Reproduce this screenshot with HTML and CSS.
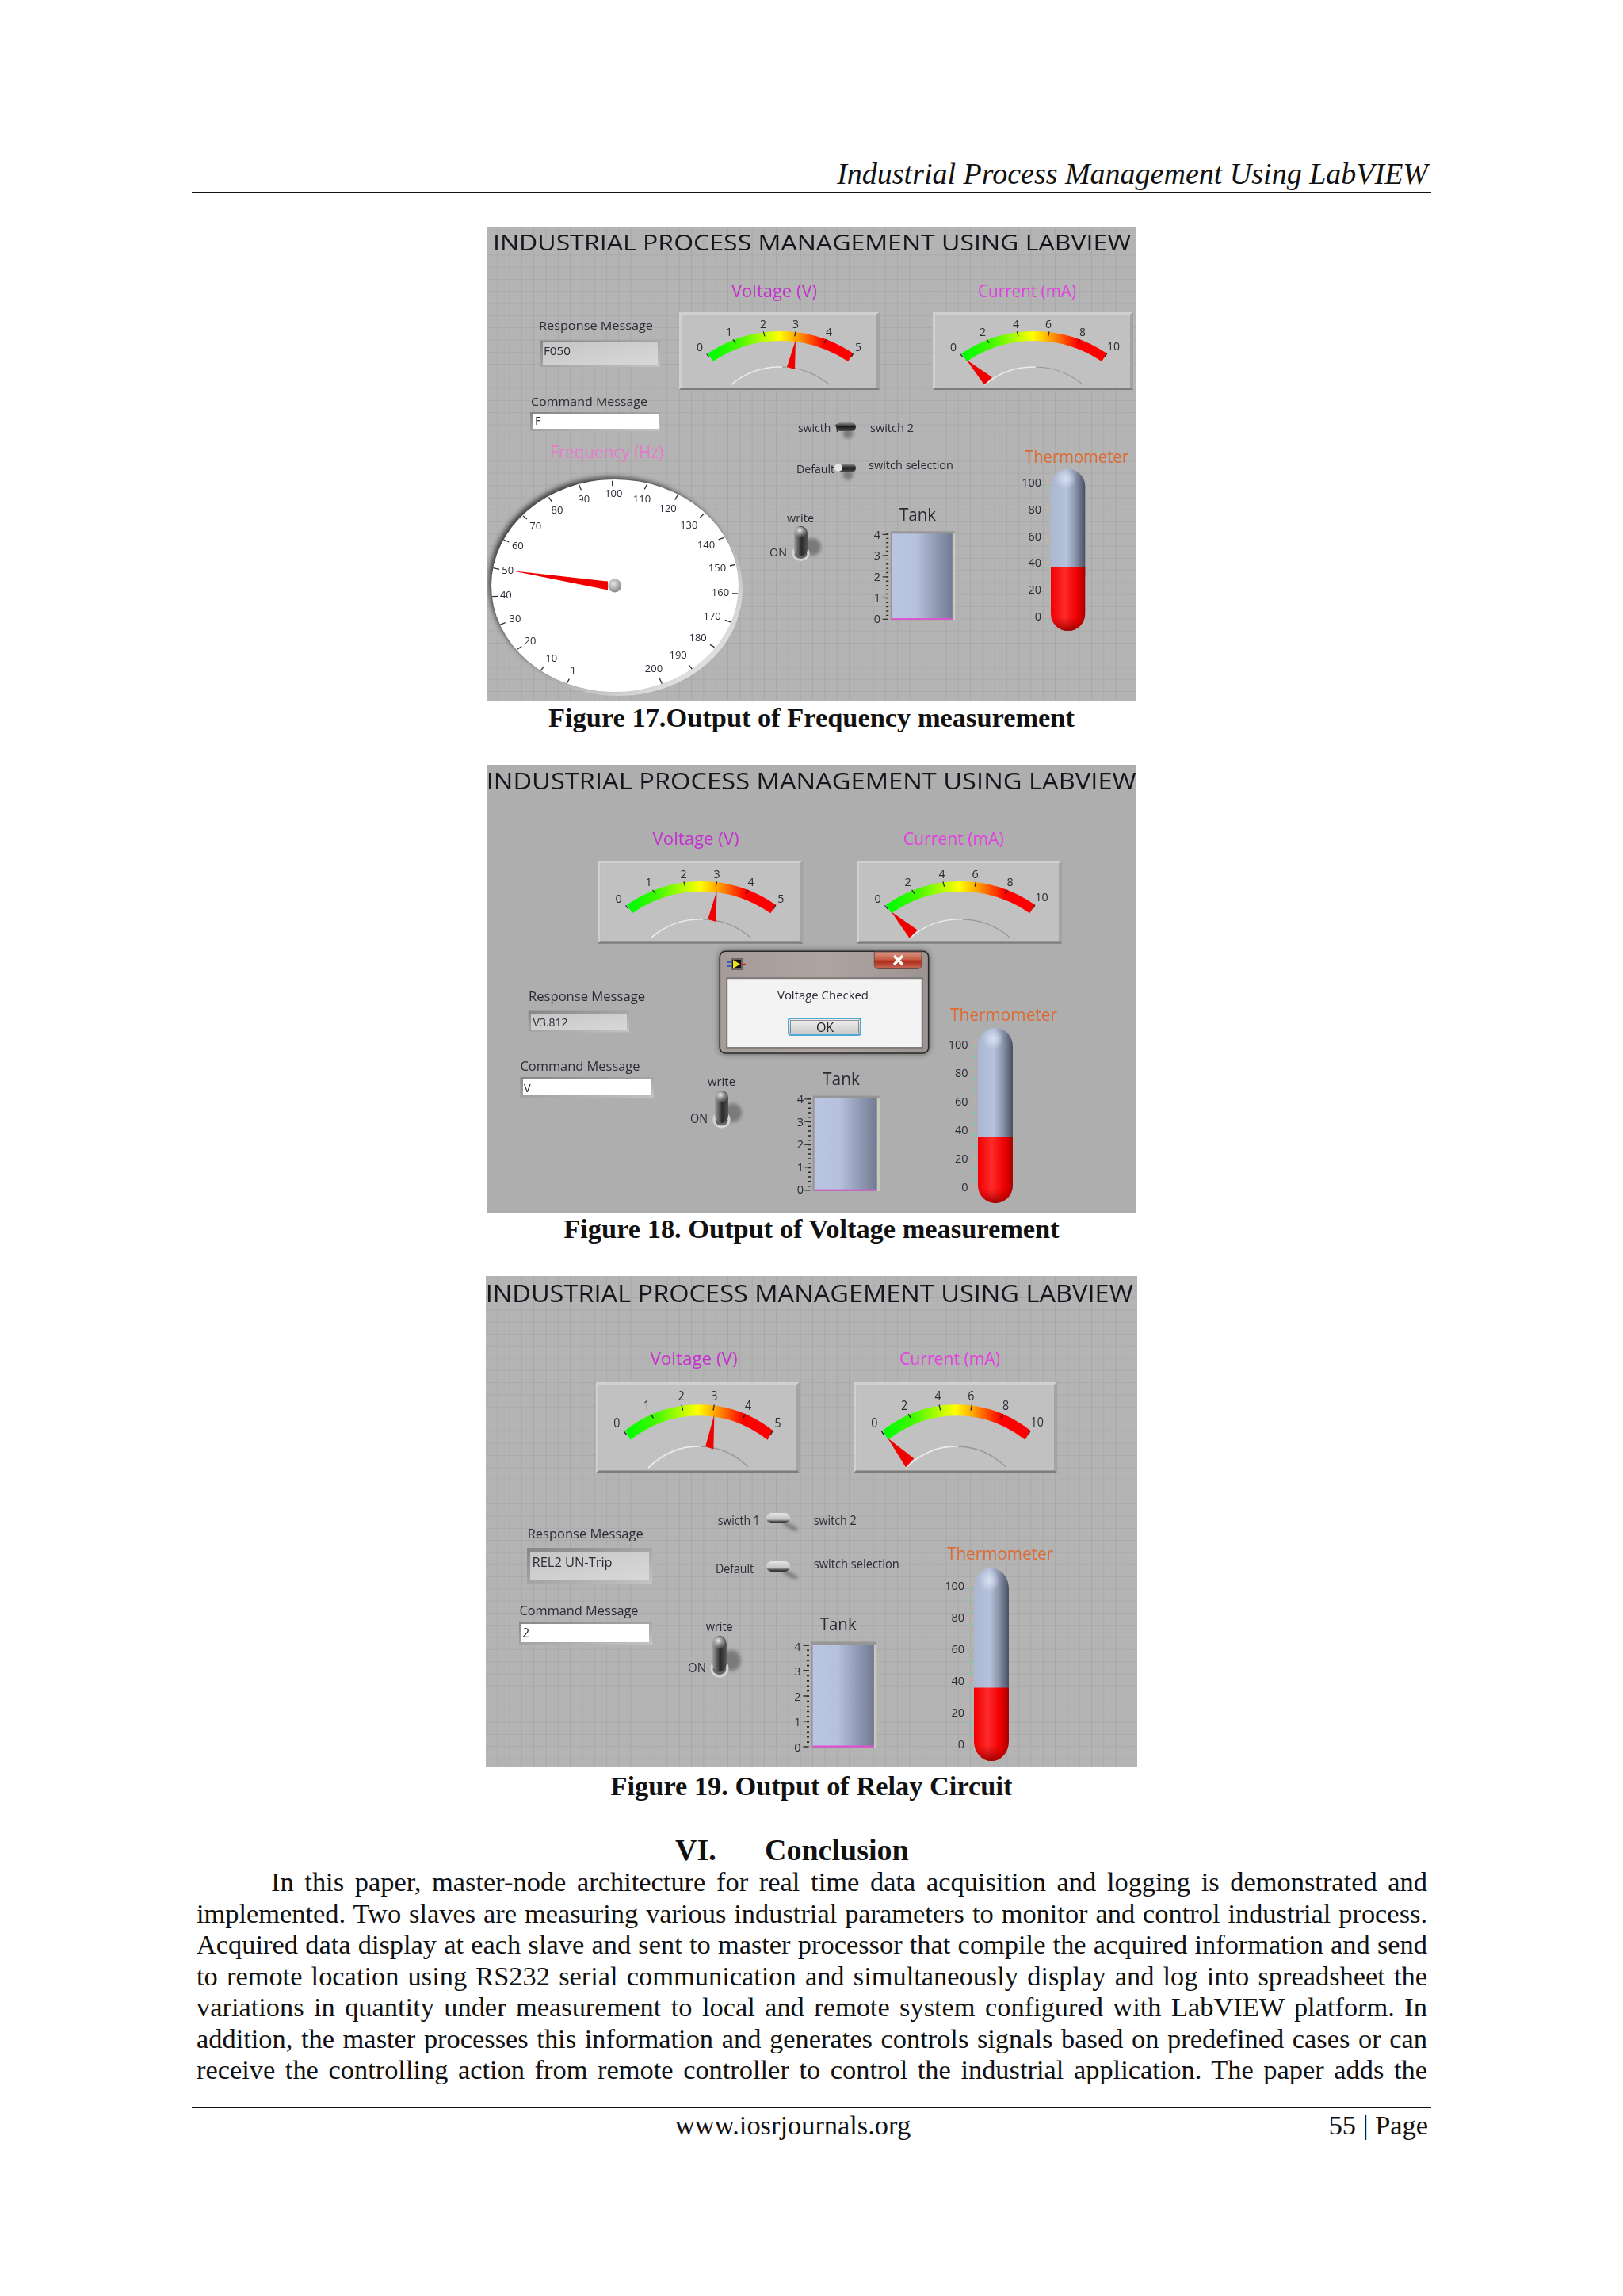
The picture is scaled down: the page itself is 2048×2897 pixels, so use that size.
FILE: index.html
```html
<!DOCTYPE html>
<html lang="en">
<head>
  <meta charset="UTF-8" />
  <meta name="viewport" content="width=device-width, initial-scale=1.0"/>
  <title>Industrial Process Management Using LabVIEW</title>
  <link rel="stylesheet" href="styles.css">
</head>
<body>
<div class="page">
  <header class="running-head">Industrial Process Management Using LabVIEW</header>

  <!-- shared widgets, page-coordinate panels below just place them -->
  <svg class="defs" width="0" height="0" aria-hidden="true">
    <defs>
      <pattern id="grid" width="15.3" height="15.3" patternUnits="userSpaceOnUse">
        <path d="M15.3 0H0V15.3" fill="none" stroke="#a0a0a0" stroke-width="1.1"/>
      </pattern>
      <linearGradient id="arcFill">
        <stop offset="0" stop-color="#00ff00"/>
        <stop offset=".2" stop-color="#44f800"/>
        <stop offset=".49" stop-color="#ffff00"/>
        <stop offset=".62" stop-color="#ffa000"/>
        <stop offset=".81" stop-color="#ff0000"/>
      </linearGradient>
      <linearGradient id="frame" x1="0" y1="0" x2="1" y2="1">
        <stop offset="0" stop-color="#858585"/>
        <stop offset="1" stop-color="#c4c4c4"/>
      </linearGradient>
      <linearGradient id="readout" x1="0" y1="0" x2="1" y2="1">
        <stop offset="0" stop-color="#c6c6c6"/>
        <stop offset="1" stop-color="#d8d8d8"/>
      </linearGradient>
      <linearGradient id="tankFill">
        <stop offset="0" stop-color="#b9c5e2"/>
        <stop offset=".4" stop-color="#b6c1dc"/>
        <stop offset="1" stop-color="#727a93"/>
      </linearGradient>
      <linearGradient id="thermoGlass">
        <stop offset="0" stop-color="#acb8d2"/>
        <stop offset=".45" stop-color="#b6c2dc"/>
        <stop offset=".7" stop-color="#8d97ae"/>
        <stop offset="1" stop-color="#4a5064"/>
      </linearGradient>
      <linearGradient id="thermoRed">
        <stop offset="0" stop-color="#f00000"/>
        <stop offset=".4" stop-color="#ff2a2a"/>
        <stop offset=".75" stop-color="#f00000"/>
        <stop offset="1" stop-color="#a80000"/>
      </linearGradient>
      <linearGradient id="redCap" x1="0" y1="0" x2="0" y2="1">
        <stop offset=".78" stop-color="#c00000" stop-opacity="0"/>
        <stop offset="1" stop-color="#900000" stop-opacity=".9"/>
      </linearGradient>
      <radialGradient id="glassTop" cx=".5" cy=".5" r=".5">
        <stop offset="0" stop-color="#d8e0f0"/>
        <stop offset="1" stop-color="#d8e0f0" stop-opacity="0"/>
      </radialGradient>
      <radialGradient id="hub" cx=".4" cy=".35" r=".7">
        <stop offset="0" stop-color="#e8e8e8"/>
        <stop offset="1" stop-color="#808080"/>
      </radialGradient>
      <linearGradient id="dialRim" x1="0" y1="0" x2="1" y2="1">
        <stop offset=".55" stop-color="#b0b0b0"/>
        <stop offset=".85" stop-color="#e0e0e0"/>
        <stop offset="1" stop-color="#bcbcbc"/>
      </linearGradient>
      <linearGradient id="leverDark" x1="0" y1="0" x2="0" y2="1">
        <stop offset="0" stop-color="#9a9a9a"/>
        <stop offset=".5" stop-color="#1c1c1c"/>
        <stop offset="1" stop-color="#555"/>
      </linearGradient>
      <linearGradient id="leverLight" x1="0" y1="0" x2="0" y2="1">
        <stop offset="0" stop-color="#e4e4e4"/>
        <stop offset=".6" stop-color="#c4c4c4"/>
        <stop offset=".85" stop-color="#444"/>
        <stop offset="1" stop-color="#333"/>
      </linearGradient>
      <linearGradient id="leverTall">
        <stop offset="0" stop-color="#a0a0a0"/>
        <stop offset=".55" stop-color="#2a2a2a"/>
        <stop offset="1" stop-color="#555"/>
      </linearGradient>
      <radialGradient id="knob" cx=".45" cy=".35" r=".6">
        <stop offset="0" stop-color="#f0f0f0"/>
        <stop offset="1" stop-color="#8c8c8c" stop-opacity=".4"/>
      </radialGradient>
      <linearGradient id="closeRed" x1="0" y1="0" x2="0" y2="1">
        <stop offset="0" stop-color="#d89a88"/>
        <stop offset=".45" stop-color="#c45a42"/>
        <stop offset=".55" stop-color="#b02a18"/>
        <stop offset="1" stop-color="#c8705c"/>
      </linearGradient>
      <linearGradient id="dlgTitle">
        <stop offset="0" stop-color="#a59b98"/>
        <stop offset=".5" stop-color="#b0a4a0"/>
        <stop offset="1" stop-color="#9c9492"/>
      </linearGradient>
      <linearGradient id="okFace" x1="0" y1="0" x2="0" y2="1">
        <stop offset="0" stop-color="#f2f2f2"/>
        <stop offset=".5" stop-color="#dcdcdc"/>
        <stop offset="1" stop-color="#c8c8c8"/>
      </linearGradient>
      <filter id="soft2" x="-20%" y="-20%" width="140%" height="140%"><feGaussianBlur stdDeviation="2"/></filter>
      <filter id="soft3" x="-20%" y="-20%" width="140%" height="140%"><feGaussianBlur stdDeviation="3"/></filter>
      <filter id="soft4" x="-20%" y="-20%" width="140%" height="140%"><feGaussianBlur stdDeviation="4"/></filter>

      <g id="meter">
        <rect width="253" height="98" fill="#8a8a8a"/>
        <polygon points="0,0 253,0 249,3 3,3 3,95 0,98" fill="#d0d0d0"/>
        <polygon points="253,0 253,98 249,95 249,3" fill="#a4a4a4"/>
        <polygon points="0,98 253,98 250,95 3,95" fill="#7c7c7c"/>
        <rect x="3" y="3" width="246" height="92" fill="#c1c1c1"/>
        <path d="M39.5 57A158.5 158.5 0 0 1 216.5 57" fill="none" stroke="url(#arcFill)" stroke-width="12"/>
        <path d="M34.7 52.7L38 56.7M68 34.3L71.3 38.7M106.3 24.3L108 30.3M147 24.3L145.7 30.3M185.7 34.3L183 38.7M219.7 52L217 56.7" stroke="#222" stroke-width="1.2" fill="none"/>
        <path d="M65 92A95 95 0 0 1 130 69" fill="none" stroke="#ececec" stroke-width="1.6"/>
        <path d="M130 69A95 95 0 0 1 189 91" fill="none" stroke="#969696" stroke-width="1.2"/>
      </g>

      <g id="tank">
        <rect x="-2" y="-3" width="81" height="112" fill="#8d8d8d" opacity=".75"/>
        <rect x="76" y="0" width="3.5" height="109" fill="#c6cabb"/>
        <rect width="76" height="108" fill="url(#tankFill)"/>
        <rect y="106.8" width="76" height="1.8" fill="#e050d0"/>
        <path d="M-6 0V108" stroke="#222" stroke-width="3" stroke-dasharray="1.4 3.99" fill="none"/>
        <path d="M-12 1H-5M-12 27.5H-5M-12 54.5H-5M-12 81H-5M-12 108H-5" stroke="#333" stroke-width="1.2" fill="none"/>
      </g>

      <g id="thermoGlassPart">
        <path d="M0 21.6A21.65 21.65 0 0 1 43.3 21.6V135H0Z" fill="url(#thermoGlass)"/>
        <ellipse cx="19" cy="13" rx="13" ry="12" fill="url(#glassTop)"/>
        <path d="M-4 20V188" stroke="#6ad8a4" stroke-width="2" stroke-dasharray="2 11" fill="none"/>
        <path d="M-6 17.4H-2M-6 51H-2M-6 85H-2M-6 118.4H-2M-6 152H-2M-6 186H-2" stroke="#dba98c" stroke-width="1.4" fill="none"/>
      </g>
      <g id="thermoRedPart">
        <path d="M0 0H43.3V59.4A21.65 21.65 0 0 1 0 59.4Z" fill="url(#thermoRed)"/>
        <path d="M0 0H43.3V59.4A21.65 21.65 0 0 1 0 59.4Z" fill="url(#redCap)"/>
      </g>

      <g id="bigToggle">
        <ellipse cx="23" cy="26" rx="11" ry="11" fill="#7a7a7a" filter="url(#soft2)"/>
        <ellipse cx="8.5" cy="34" rx="11" ry="10" fill="#d4d4d4"/>
        <ellipse cx="8.5" cy="35" rx="8" ry="6" fill="#666"/>
        <rect width="17" height="38" rx="8.5" fill="url(#leverTall)"/>
        <ellipse cx="8" cy="7" rx="7.5" ry="6.5" fill="url(#knob)"/>
      </g>
      <g id="leverDarkPart">
        <circle cx="15" cy="14" r="6.5" fill="#7c7c7c" filter="url(#soft2)"/>
        <rect width="25" height="11" rx="5.5" fill="url(#leverDark)"/>
      </g>
      <g id="leverLightPart">
        <path d="M24 11L38 18L40 23L32 21L20 14Z" fill="#777" filter="url(#soft2)"/>
        <rect width="30" height="13" rx="6.5" fill="url(#leverLight)"/>
      </g>
    </defs>
  </svg>

  <figure class="figure fig-17">
    <svg class="panel" width="818" height="599" viewBox="615 286 818 599">
      <rect x="615" y="286" width="818" height="599" class="panel-bg"/>
      <rect x="615" y="286" width="818" height="599" fill="url(#grid)"/>
      <text class="t-title" x="622" y="316" textLength="805" lengthAdjust="spacingAndGlyphs">INDUSTRIAL PROCESS MANAGEMENT USING LABVIEW</text>

      <text class="t-head t-voltage" x="923" y="375" textLength="108" lengthAdjust="spacingAndGlyphs">Voltage (V)</text>
      <text class="t-head t-current" x="1234" y="375" textLength="124" lengthAdjust="spacingAndGlyphs">Current (mA)</text>

      <g transform="translate(857 394)">
        <use href="#meter"/>
        <polygon points="147,35 136,69 146,72" fill="#f00000"/>
        <text class="t-scale" x="26" y="49">0</text><text class="t-scale" x="63" y="30">1</text><text class="t-scale" x="106" y="20">2</text><text class="t-scale" x="147" y="20">3</text><text class="t-scale" x="189" y="30">4</text><text class="t-scale" x="226" y="49">5</text>
      </g>
      <g transform="translate(1177 394)">
        <use href="#meter"/>
        <polygon points="42.5,60 65,91.6 75,82" fill="#f00000"/>
        <text class="t-scale" x="26" y="49">0</text><text class="t-scale" x="63" y="30">2</text><text class="t-scale" x="105" y="20">4</text><text class="t-scale" x="146" y="20">6</text><text class="t-scale" x="189" y="30">8</text><text class="t-scale" x="228" y="48">10</text>
      </g>

      <text class="t-label" x="680" y="416" textLength="144" lengthAdjust="spacingAndGlyphs">Response Message</text>
      <rect x="681" y="429.5" width="152" height="33.5" fill="url(#frame)"/>
      <rect x="685" y="432" width="145" height="28" fill="url(#readout)"/>
      <text class="t-label" x="686" y="448" textLength="34" lengthAdjust="spacingAndGlyphs">F050</text>
      <text class="t-label" x="670" y="512" textLength="147" lengthAdjust="spacingAndGlyphs">Command Message</text>
      <rect x="669" y="520" width="164" height="24" fill="url(#frame)"/>
      <rect x="672" y="522" width="160" height="19" fill="#fff"/>
      <text class="t-label" x="675" y="536">F</text>

      <text class="t-head t-freq" x="694" y="578" textLength="143" lengthAdjust="spacingAndGlyphs">Frequency (Hz)</text>

      <text class="t-label" x="1007" y="545" textLength="53" lengthAdjust="spacingAndGlyphs">swicth 1</text>
      <use href="#leverDarkPart" transform="translate(1055 533)"/>
      <text class="t-label" x="1098" y="545" textLength="55" lengthAdjust="spacingAndGlyphs">switch 2</text>
      <text class="t-label" x="1005" y="597" textLength="48" lengthAdjust="spacingAndGlyphs">Default</text>
      <use href="#leverDarkPart" transform="translate(1055 585)"/>
      <circle cx="1058" cy="590" r="5" fill="#e4e4e4"/>
      <text class="t-label" x="1096" y="592" textLength="107" lengthAdjust="spacingAndGlyphs">switch selection</text>

      <text class="t-label" x="993" y="659" textLength="34" lengthAdjust="spacingAndGlyphs">write</text>
      <text class="t-label" x="971" y="702" textLength="22" lengthAdjust="spacingAndGlyphs">ON</text>
      <use href="#bigToggle" transform="translate(1002 664)"/>

      <!-- dial -->
      <ellipse cx="780" cy="743" rx="157" ry="135" fill="url(#dialRim)"/>
      <ellipse cx="772" cy="735" rx="155" ry="133" fill="#3c3c3c" filter="url(#soft3)"/>
      <ellipse cx="776" cy="739" rx="156" ry="134" fill="#fff"/>
      <g transform="translate(610 590) scale(.3333)">
        <path class="dial-ticks" d="M488 50V70M362 65L370 85M248 112L258 128M150 183L165 195M77 273L97 282M37 380L60 385M33 488L55 487M62 595L83 587M128 688L145 677M217 768L230 752M315 818L325 800M620 63L610 82M735 105L725 122M835 175L820 190M910 265L890 273M953 367L933 372M963 477H942M936 585L915 577M875 680L858 670M790 762L778 748M676 818L667 798"/>
        <text class="t-dial" x="493" y="110">100</text><text class="t-dial" x="380" y="131">90</text><text class="t-dial" x="279" y="173">80</text><text class="t-dial" x="197" y="235">70</text><text class="t-dial" x="130" y="309">60</text><text class="t-dial" x="92" y="401">50</text><text class="t-dial" x="85" y="496">40</text><text class="t-dial" x="120" y="586">30</text><text class="t-dial" x="177" y="668">20</text><text class="t-dial" x="257" y="735">10</text><text class="t-dial" x="340" y="781">1</text><text class="t-dial" x="600" y="131">110</text><text class="t-dial" x="698" y="168">120</text><text class="t-dial" x="778" y="230">130</text><text class="t-dial" x="843" y="306">140</text><text class="t-dial" x="885" y="393">150</text><text class="t-dial" x="897" y="486">160</text><text class="t-dial" x="866" y="576">170</text><text class="t-dial" x="812" y="658">180</text><text class="t-dial" x="737" y="723">190</text><text class="t-dial" x="645" y="775">200</text>
      </g>
      <polygon points="645,720 767,733.5 767,744.5" fill="#f00000"/>
      <circle cx="775.7" cy="739" r="8.5" fill="url(#hub)"/>

      <text class="t-big" x="1135" y="657" textLength="46" lengthAdjust="spacingAndGlyphs">Tank</text>
      <use href="#tank" transform="translate(1125.7 673.3)"/>
      <text class="t-num" x="1107" y="680">4</text><text class="t-num" x="1107" y="706">3</text><text class="t-num" x="1107" y="733">2</text><text class="t-num" x="1107" y="759">1</text><text class="t-num" x="1107" y="786">0</text>

      <text class="t-head t-thermo" x="1293" y="584" textLength="131" lengthAdjust="spacingAndGlyphs">Thermometer</text>
      <use href="#thermoGlassPart" transform="translate(1326 591.6)"/>
      <use href="#thermoRedPart" transform="translate(1326 715)"/>
      <text class="t-num t-end" x="1314" y="614">100</text><text class="t-num t-end" x="1314" y="648">80</text><text class="t-num t-end" x="1314" y="682">60</text><text class="t-num t-end" x="1314" y="715">40</text><text class="t-num t-end" x="1314" y="749">20</text><text class="t-num t-end" x="1314" y="783">0</text>
    </svg>
    <figcaption class="caption">Figure 17.Output of Frequency measurement</figcaption>
  </figure>

  <figure class="figure fig-18">
    <svg class="panel" width="819" height="565" viewBox="614 964 819 565">
      <rect x="614" y="964" width="819" height="565" class="panel-bg panel-bg-plain"/>
      <text class="t-title t-title-2" x="612.7" y="994.5" textLength="820" lengthAdjust="spacingAndGlyphs">INDUSTRIAL PROCESS MANAGEMENT USING LABVIEW</text>

      <text class="t-head t-voltage" x="822.6" y="1065" textLength="109" lengthAdjust="spacingAndGlyphs">Voltage (V)</text>
      <text class="t-head t-current" x="1138.7" y="1065" textLength="127" lengthAdjust="spacingAndGlyphs">Current (mA)</text>

      <g transform="translate(753 1085.5) scale(1.024 1.062)">
        <use href="#meter"/>
        <polygon points="147,35 136,69 146,72" fill="#f00000"/>
        <text class="t-scale" x="26" y="49">0</text><text class="t-scale" x="63" y="30">1</text><text class="t-scale" x="106" y="20">2</text><text class="t-scale" x="147" y="20">3</text><text class="t-scale" x="189" y="30">4</text><text class="t-scale" x="226" y="49">5</text>
      </g>
      <g transform="translate(1080 1085.5) scale(1.024 1.062)">
        <use href="#meter"/>
        <polygon points="42.5,60 65,91.6 75,82" fill="#f00000"/>
        <text class="t-scale" x="26" y="49">0</text><text class="t-scale" x="63" y="30">2</text><text class="t-scale" x="105" y="20">4</text><text class="t-scale" x="146" y="20">6</text><text class="t-scale" x="189" y="30">8</text><text class="t-scale" x="228" y="48">10</text>
      </g>

      <text class="t-label t-label-lg" x="666" y="1262" textLength="147" lengthAdjust="spacingAndGlyphs">Response Message</text>
      <rect x="665.7" y="1274.6" width="127.3" height="26.8" fill="url(#frame)"/>
      <rect x="669" y="1278" width="121" height="20" fill="url(#readout)"/>
      <text class="t-label" x="671.6" y="1294" textLength="44" lengthAdjust="spacingAndGlyphs">V3.812</text>
      <text class="t-label t-label-lg" x="655.5" y="1350" textLength="151" lengthAdjust="spacingAndGlyphs">Command Message</text>
      <rect x="655.5" y="1358" width="168.5" height="27" fill="url(#frame)"/>
      <rect x="659" y="1361" width="161.5" height="20" fill="#fff"/>
      <text class="t-label" x="660" y="1377">V</text>

      <text class="t-label" x="892" y="1369" textLength="35" lengthAdjust="spacingAndGlyphs">write</text>
      <text class="t-label t-label-lg" x="870" y="1416" textLength="22" lengthAdjust="spacingAndGlyphs">ON</text>
      <use href="#bigToggle" transform="translate(901 1375) scale(1 1.08)"/>

      <text class="t-big" x="1037" y="1367.5" textLength="47" lengthAdjust="spacingAndGlyphs">Tank</text>
      <use href="#tank" transform="translate(1026.7 1384.8) scale(1.037 1.075)"/>
      <text class="t-num" x="1009" y="1391">4</text><text class="t-num" x="1009" y="1420">3</text><text class="t-num" x="1009" y="1448">2</text><text class="t-num" x="1009" y="1477">1</text><text class="t-num" x="1009" y="1505">0</text>

      <text class="t-head t-thermo" x="1198" y="1287" textLength="135" lengthAdjust="spacingAndGlyphs">Thermometer</text>
      <use href="#thermoGlassPart" transform="translate(1233 1296) scale(1.016 1.081)"/>
      <use href="#thermoRedPart" transform="translate(1233 1433.4) scale(1.016 1.032)"/>
      <text class="t-num t-end" x="1220.6" y="1322">100</text><text class="t-num t-end" x="1220.6" y="1358">80</text><text class="t-num t-end" x="1220.6" y="1394">60</text><text class="t-num t-end" x="1220.6" y="1430">40</text><text class="t-num t-end" x="1220.6" y="1466">20</text><text class="t-num t-end" x="1220.6" y="1502">0</text>

      <!-- message box sits over the panel -->
      <rect x="907.3" y="1199.3" width="263.4" height="128.7" rx="7" fill="#000" opacity=".55" filter="url(#soft4)"/>
      <rect x="907.3" y="1199.3" width="263.4" height="128.7" rx="7" fill="url(#dlgTitle)" stroke="#2a2a2a" stroke-width="1.6"/>
      <path d="M1102.3 1200V1216a5 5 0 0 0 5 5.5H1157a5 5 0 0 0 5-5.5V1200Z" fill="url(#closeRed)" stroke="#6e4a44"/>
      <path d="M1127 1205L1138 1216M1138 1205L1127 1216" stroke="#fff" stroke-width="3.4"/>
      <rect x="921" y="1208" width="15" height="15" fill="#666"/>
      <rect x="923" y="1210" width="11" height="11" fill="#111"/>
      <polygon points="924,1210 933,1215.5 924,1221" fill="#f2e020"/>
      <path d="M917 1213H922M917 1218H922" stroke="#2040d0" stroke-width="1.4"/>
      <path d="M935 1215.5H940" stroke="#d02020" stroke-width="1.4"/>
      <rect x="916" y="1233" width="247" height="88" fill="none" stroke="#777" stroke-width="1.6"/>
      <rect x="917.3" y="1234.3" width="244.4" height="85.7" fill="#f3f3f3"/>
      <text class="t-label" x="980" y="1259.5" textLength="115" lengthAdjust="spacingAndGlyphs">Voltage Checked</text>
      <rect x="994" y="1284" width="91" height="21" rx="3" fill="url(#okFace)" stroke="#4ea6d4" stroke-width="2"/>
      <rect x="996.5" y="1286.5" width="86" height="16" fill="none" stroke="#333" stroke-width="1" stroke-dasharray="1 1"/>
      <text class="t-ok" x="1040" y="1300.5">OK</text>
    </svg>
    <figcaption class="caption">Figure 18. Output of Voltage measurement</figcaption>
  </figure>

  <figure class="figure fig-19">
    <svg class="panel" width="822" height="619" viewBox="613 1610 822 619">
      <rect x="613" y="1610" width="822" height="619" class="panel-bg"/>
      <rect x="613" y="1610" width="822" height="619" fill="url(#grid)"/>
      <text class="t-title t-title-3" x="612.7" y="1643" textLength="817" lengthAdjust="spacingAndGlyphs">INDUSTRIAL PROCESS MANAGEMENT USING LABVIEW</text>

      <text class="t-head t-head-lg t-voltage" x="820.5" y="1722" textLength="110" lengthAdjust="spacingAndGlyphs">Voltage (V)</text>
      <text class="t-head t-head-lg t-current" x="1135" y="1722" textLength="127" lengthAdjust="spacingAndGlyphs">Current (mA)</text>

      <g transform="translate(752 1744) scale(1.016 1.173)">
        <use href="#meter"/>
        <polygon points="147,35 136,69 146,72" fill="#f00000"/>
        <text class="t-scale" x="26" y="49">0</text><text class="t-scale" x="63" y="30">1</text><text class="t-scale" x="106" y="20">2</text><text class="t-scale" x="147" y="20">3</text><text class="t-scale" x="189" y="30">4</text><text class="t-scale" x="226" y="49">5</text>
      </g>
      <g transform="translate(1077 1744) scale(1.016 1.173)">
        <use href="#meter"/>
        <polygon points="42.5,60 65,91.6 75,82" fill="#f00000"/>
        <text class="t-scale" x="26" y="49">0</text><text class="t-scale" x="63" y="30">2</text><text class="t-scale" x="105" y="20">4</text><text class="t-scale" x="146" y="20">6</text><text class="t-scale" x="189" y="30">8</text><text class="t-scale" x="228" y="48">10</text>
      </g>

      <text class="t-label t-label-lg" x="905.7" y="1923.5" textLength="53" lengthAdjust="spacingAndGlyphs">swicth 1</text>
      <use href="#leverLightPart" transform="translate(967 1909)"/>
      <text class="t-label t-label-lg" x="1026.7" y="1923.5" textLength="54" lengthAdjust="spacingAndGlyphs">switch 2</text>
      <text class="t-label t-label-lg" x="903" y="1984.7" textLength="48" lengthAdjust="spacingAndGlyphs">Default</text>
      <use href="#leverLightPart" transform="translate(967 1970)"/>
      <text class="t-label t-label-lg" x="1026.7" y="1978.6" textLength="108" lengthAdjust="spacingAndGlyphs">switch selection</text>

      <text class="t-label t-label-lg" x="665.7" y="1941.4" textLength="146" lengthAdjust="spacingAndGlyphs">Response Message</text>
      <rect x="665" y="1953" width="158" height="45" fill="url(#frame)"/>
      <rect x="669" y="1958" width="150" height="35" fill="url(#readout)"/>
      <text class="t-label t-label-lg" x="671.6" y="1977" textLength="101" lengthAdjust="spacingAndGlyphs">REL2 UN-Trip</text>
      <text class="t-label t-label-lg" x="655.5" y="2037.8" textLength="150" lengthAdjust="spacingAndGlyphs">Command Message</text>
      <rect x="655" y="2046" width="168" height="29" fill="url(#frame)"/>
      <rect x="658" y="2049" width="161" height="23" fill="#fff"/>
      <text class="t-label t-label-lg" x="659" y="2066">2</text>

      <text class="t-label t-label-lg" x="890.7" y="2058" textLength="34" lengthAdjust="spacingAndGlyphs">write</text>
      <text class="t-label t-label-lg" x="868" y="2110" textLength="23" lengthAdjust="spacingAndGlyphs">ON</text>
      <use href="#bigToggle" transform="translate(899 2064) scale(1.05 1.2)"/>

      <text class="t-big" x="1034.7" y="2057" textLength="46" lengthAdjust="spacingAndGlyphs">Tank</text>
      <use href="#tank" transform="translate(1025.6 2075) scale(1.016 1.194)"/>
      <text class="t-num" x="1006.4" y="2083">4</text><text class="t-num" x="1006.4" y="2114">3</text><text class="t-num" x="1006.4" y="2146">2</text><text class="t-num" x="1006.4" y="2178">1</text><text class="t-num" x="1006.4" y="2210">0</text>

      <text class="t-head t-head-lg t-thermo" x="1195" y="1968" textLength="134" lengthAdjust="spacingAndGlyphs">Thermometer</text>
      <use href="#thermoGlassPart" transform="translate(1229 1978.6) scale(1.016 1.191)"/>
      <use href="#thermoRedPart" transform="translate(1229 2129.6) scale(1.016 1.141)"/>
      <text class="t-num t-end" x="1217" y="2006">100</text><text class="t-num t-end" x="1217" y="2046">80</text><text class="t-num t-end" x="1217" y="2086">60</text><text class="t-num t-end" x="1217" y="2126">40</text><text class="t-num t-end" x="1217" y="2166">20</text><text class="t-num t-end" x="1217" y="2206">0</text>
    </svg>
    <figcaption class="caption">Figure 19. Output of Relay Circuit</figcaption>
  </figure>

  <h2 class="section-title"><span class="section-num">VI.</span>Conclusion</h2>
  <p class="body-text">In this paper, master-node architecture for real time data acquisition and logging is demonstrated and<br>
  implemented. Two slaves are measuring various industrial parameters to monitor and control industrial process.<br>
  Acquired data display at each slave and sent to master processor that compile the acquired information and send<br>
  to remote location using RS232 serial communication and simultaneously display and log into spreadsheet the<br>
  variations in quantity under measurement to local and remote system configured with LabVIEW platform. In<br>
  addition, the master processes this information and generates controls signals based on predefined cases or can<br>
  receive the controlling action from remote controller to control the industrial application. The paper adds the</p>

  <footer class="page-foot">
    <span class="foot-site">www.iosrjournals.org</span>
    <span class="foot-page">55 | Page</span>
  </footer>
</div>
</body>
</html>
```

FILE: styles.css
```css
html, body {
  margin: 0;
  padding: 0;
  background-color: #fff;
}
.page {
  box-sizing: border-box;
  width: 2048px;
  height: 2897px;
  padding: 0 242px;
  font-family: "Liberation Serif", "Times New Roman", serif;
  font-size: 34.4px;
  line-height: 39.5px;
  color: #111;
  overflow: hidden;
}
.defs {
  position: absolute;
}
.running-head {
  box-sizing: border-box;
  height: 244px;
  padding: 0 4px 2px 0;
  display: flex;
  align-items: flex-end;
  justify-content: flex-end;
  border-bottom: 2px solid #111;
  font-style: italic;
  font-size: 38px;
  line-height: 42px;
}
.figure {
  margin: 0;
}
.fig-17 { margin-top: 42px; }
.fig-18 { margin-top: 39px; }
.fig-19 { margin-top: 40px; }
.panel {
  display: block;
  margin: 0 auto;
  filter: blur(0.4px);
}
.caption {
  margin-top: 1px;
  text-align: center;
  font-weight: bold;
}
.fig-19 .caption { margin-top: 4.5px; }
.section-title {
  margin: 40px 0 0;
  padding-left: 610px;
  font-size: 38px;
  line-height: 42px;
  font-weight: bold;
}
.section-num {
  display: inline-block;
  width: 113px;
}
.body-text {
  margin: 0;
  padding: 0 5px 0 6px;
  text-indent: 94px;
  text-align: justify;
  text-align-last: justify;
}
.page-foot {
  margin-top: 26px;
  padding: 2px 4px 0 610px;
  display: flex;
  justify-content: space-between;
  border-top: 2px solid #111;
}

/* panel fills */
.panel-bg { fill: #b4b4b4; }
.panel-bg-plain { fill: #aeaeae; }

/* panel text */
.panel text {
  font-family: "Open Sans", "Noto Sans", sans-serif;
  fill: #2b2b36;
}
.panel .t-title { font-size: 28px; fill: #15151c; }
.panel .t-title-2 { font-size: 29px; }
.panel .t-title-3 { font-size: 30.5px; }
.panel .t-head { font-size: 21px; }
.panel .t-head-lg { font-size: 22.5px; }
.panel .t-voltage { fill: #c62fd0; }
.panel .t-current { fill: #e43fe0; }
.panel .t-freq { fill: #e878cc; }
.panel .t-thermo { fill: #dd6a33; }
.panel .t-label { font-size: 14.5px; }
.panel .t-label-lg { font-size: 16px; }
.panel .t-big { font-size: 21px; }
.panel .t-scale { font-size: 14px; text-anchor: middle; }
.panel .t-num { font-size: 14.5px; text-anchor: middle; }
.panel .t-end { text-anchor: end; }
.panel .t-dial { font-size: 39px; text-anchor: middle; }
.panel .t-ok { font-size: 16px; text-anchor: middle; fill: #222; }
.dial-ticks {
  fill: none;
  stroke: #333;
  stroke-width: 4;
}
```
